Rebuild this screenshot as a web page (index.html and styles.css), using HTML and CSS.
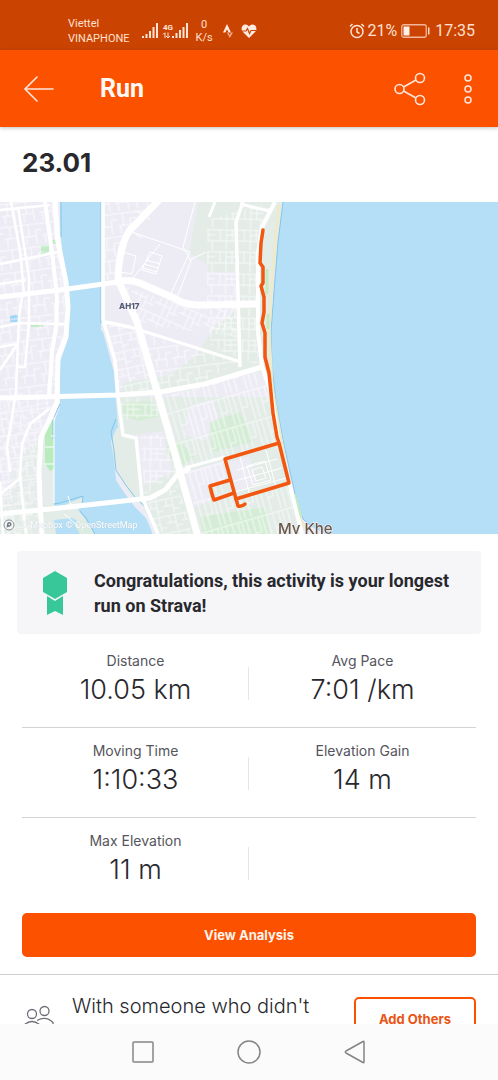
FILE: index.html
```html
<!doctype html>
<html lang="en">
<head>
	<meta charset="utf-8" />
	<meta name="viewport" content="width=device-width, initial-scale=1" />
	<title>Run</title>

	<link rel="stylesheet" href="styles.css">
</head>
<body>

	<!-- BEGIN: Status Bar. -->
	<div class="status">
		<div class="status__carrier">Viettel<br />VINAPHONE</div>
		<svg class="status__signal" width="48" height="18" viewBox="0 0 48 18" fill="#ffe3d5">
			<path d="M1 14h2v2H1zM4.500 12h2v4h-2zM8 9h2v7H8zM11.500 5h2v11h-2zM15 1h2v15h-2z" />
			<path d="M31 14h2v2h-2zM34.500 11h2v5h-2zM38 8h2v8h-2zM41.500 5h2v11h-2zM45 1h2v15h-2z" />
			<text class="status__network" x="22" y="8">4G</text>
			<path d="M24 11v5M22 12.500l2-2M27 10.500v5M25 14l2 2 2-2" fill="none" stroke="#ffe3d5" />
		</svg>
		<div class="status__speed">0<br />K/s</div>
		<svg width="10" height="16" viewBox="0 0 10 16">
			<path d="M0 9.500L4 1l4 8.500H5.600L4 6.200 2.400 9.500z" fill="#ffe9de" />
			<path d="M3.800 9.500h1.800l1.200 2.400L8 9.500h2L6.800 15z" fill="#f0a888" />
		</svg>
		<svg class="status__heart" width="16" height="15" viewBox="0 0 16 15">
			<path d="M8 14L1.500 7.500C-1 4 2-.5 5.500.8 6.700 1.100 7.500 2 8 2.600c.5-.6 1.300-1.500 2.500-1.800C14 -.5 17 4 14.500 7.500z" fill="#ffebe1" />
			<path d="M1 7h4l1.500-2.500L8.500 9.500 10 6.500h5" fill="none" stroke="#cb4300" stroke-width="1.200" />
		</svg>
		<div class="status__right">
			<svg width="16" height="16" viewBox="0 0 16 16" fill="none" stroke="#ffe3d5" stroke-width="1.500">
				<circle cx="8" cy="8.500" r="6" />
				<path d="M8 5v4l2.500 1.500M1 3.500L3.500 1M15 3.500L12.500 1" />
			</svg>
			<span>21%</span>
			<svg class="status__battery" width="29" height="14" viewBox="0 0 29 14">
				<rect x=".75" y=".75" width="24.500" height="12.500" rx="2" fill="none" stroke="#f3b59b" stroke-width="1.300" />
				<path d="M2.500 2.500h6v9h-6z" fill="#fff0e8" />
				<path d="M27 3.500h1.500v7H27z" fill="#ffd9c8" />
			</svg>
			<span>17:35</span>
		</div>
	</div>
	<!-- END: Status Bar. -->

	<!-- BEGIN: App Bar. -->
	<header class="app-bar">
		<button type="button" class="icon-button" aria-label="Back">
			<svg width="32" height="30" viewBox="0 0 32 30" fill="none" stroke="#ffe6da" stroke-width="1.600" stroke-linecap="round">
				<path d="M30 15H2M14 3L2 15l12 12" />
			</svg>
		</button>
		<h1 class="app-bar__title">Run</h1>
		<button type="button" class="icon-button" aria-label="Share">
			<svg width="32" height="34" viewBox="0 0 32 34" fill="none" stroke="#ffe6da" stroke-width="1.600">
				<circle cx="5.500" cy="17" r="4.500" />
				<circle cx="26" cy="6" r="4.500" />
				<circle cx="26" cy="28" r="4.500" />
				<path d="M9.500 15L22 8M9.500 19L22 26" />
			</svg>
		</button>
		<button type="button" class="icon-button app-bar__more" aria-label="More options">
			<svg width="10" height="32" viewBox="0 0 10 32" fill="none" stroke="#ffe6da" stroke-width="1.500">
				<circle cx="5" cy="5" r="3" />
				<circle cx="5" cy="16" r="3" />
				<circle cx="5" cy="27" r="3" />
			</svg>
		</button>
	</header>
	<!-- END: App Bar. -->

	<main class="activity">

		<h2 class="activity__name">23.01</h2>

		<!-- BEGIN: Map. -->
		<div class="map">
			<svg class="map__canvas" viewBox="0 0 498 332" role="img" aria-label="Map of the run">
				<defs>
					<pattern id="blocks-a" width="19" height="23" patternUnits="userSpaceOnUse" patternTransform="rotate(-7)">
						<path d="M0 3h19M6 3v12M0 15h13M13 9v14M13 9h6M3 15v8" />
					</pattern>
					<pattern id="blocks-b" width="24" height="22" patternUnits="userSpaceOnUse" patternTransform="rotate(1)">
						<path d="M0 2h24M0 13h24M5 2v11M11 2v20M17 2v11M21 13v9M11 7h13" />
					</pattern>
					<pattern id="blocks-c" width="26" height="19" patternUnits="userSpaceOnUse" patternTransform="rotate(24)">
						<path d="M0 2h26M0 9h17M5 2v7M11 2v17M17 2v17M17 13h9M22 2v11" />
					</pattern>
					<pattern id="blocks-d" width="21" height="31" patternUnits="userSpaceOnUse" patternTransform="rotate(-16)">
						<path d="M0 2h21M2 2v29M8 2v29M14 2v15M18 2v29M8 17h6" />
					</pattern>
					<pattern id="blocks-e" width="16" height="17" patternUnits="userSpaceOnUse" patternTransform="rotate(-12)">
						<path d="M0 2h16M0 9h10M4 2v7M10 2v15M10 13h6" />
					</pattern>
				</defs>

				<!-- Land. -->
				<path d="M0 0h498v332H0z" fill="#edecf5" />
				<g fill="#e3ece7">
					<path d="M198 0h86l-12 100 1 75-33-10-1-63-28-2-3-37-19-12z" />
					<path d="M212 60h28v-60h35l-14 70v30h-48z" opacity=".6" />
					<path d="M214 125l26-20 20 1 3 60-70 22-75 8 5-15 48-8 25-20z" />
					<path d="M110 195h163l26 137H157l-15-30-10-5-20-40z" />
					<path d="M0 305l60-5 25-5 10 37H0z" />
					<path d="M20 255l30-30 5 75-53 5z" opacity=".7" />
				</g>
				<g fill="#edecf5">
					<path d="M208 70h29v35l-30-2z" />
					<path d="M190 203l22-5 6 15-13 26-22-6z" />
					<path d="M229 260l20-6 9 28-22 8z" />
					<path d="M136 233l27-4 9 42-28 13z" />
					<path d="M185 270l38-11 4 20-20 6 4 14-18 6z" />
				</g>
				<g fill="#d5edd6">
					<path d="M122 201l28-2 10 15-22 5-14-5z" />
					<path d="M210 220l30-10 14 30-42 10z" />
					<path d="M165 246l15-6 15 15-18 12z" />
					<path d="M200 315l65-10 5 27h-67z" />
					<path d="M41 43h8v6l-8 4zM52 38h5v4h-5zM31 123h12v2H31z" fill="#c3ebc5" />
				</g>
				<path d="M10 114l10-2v8H10z" fill="#9fd5f5" />

				<!-- Side streets. -->
				<g opacity=".75">
					<path d="M0 0h58l8 85-4 60-6 60-18 30-7 97H0z" fill="url(#blocks-a)" />
					<path d="M0 200h50l-12 45 2 87H0z" fill="url(#blocks-e)" opacity=".7" />
					<path d="M105 0h52l-28 28-8 50h-16z" fill="url(#blocks-a)" />
					<path d="M122 83l68 23 50-1v30l-105-13z" fill="url(#blocks-c)" />
					<path d="M207 18l65-18-12 65v40h-53z" fill="url(#blocks-b)" />
					<path d="M210 107h48v56l-48-18z" fill="url(#blocks-b)" />
					<path d="M105 122l30 5 22 63h-38z" fill="url(#blocks-e)" />
					<path d="M143 132l95 28-38 22-42 5z" fill="url(#blocks-a)" />
					<path d="M160 195l105-27 14 73-54 14-44 14z" fill="url(#blocks-d)" />
					<path d="M120 196l38-3 6 20-40 5z" fill="url(#blocks-b)" />
					<path d="M140 235l28-5 12 38-35 25z" fill="url(#blocks-b)" />
					<path d="M185 270l40-12 11 40 53-14 8 48h-95z" fill="url(#blocks-d)" />
					<path d="M147 300l30-20 16 52h-34z" fill="url(#blocks-e)" />
				</g>
				<g class="map__street">
					<path d="M132 30l58 20-22 48M160 42l-30 38M195 0l-12 45 8 14-16 42M190 58l16-8M150 50l12 4-6 18-14-4z" />
					<path d="M146 58l14 4M144 62l14 4M143 66l14 4M123 50l13 4-4 18-12-2M135 8l15 10M130 28l12 8" />
					<path d="M237 268l40-11M231 280l51-14M235 290l51-14M240 255l10 39M266 248l10 37M247 264l18-5 6 19-18 5zM252 268l10-3 4 11-10 3z" />
				</g>

				<!-- Water. -->
				<g fill="#b4dff7">
					<path d="M60 0l1 35 2 25 5 25 1 20-2 35-7 20v45l-5 13-3 13 2 35v37l6 2 23-10-1 7-4 6 8 10 9 24h62l-11-26-11-11-10-13-9-14-2-20-3-18 5-13 2-1-4-56-11-40-2-2V0z" />
					<path d="M283 0l-5 40-4 50-3 40 1 35 4 35 7 38 7 32 7 30 6 17 9 8 13 7h173V0z" />
					<path d="M54 318l18-2 10 5 2 11H56z" />
				</g>
				<path d="M74 322l8-4 8 6 4 8H80z" fill="#dcece2" />
				<path d="M54 213l-9 17v32l5 7 4-2z" fill="#b9ebbd" />
				<g fill="none" stroke="#84c6ea">
					<path d="M101 0v121M61 0v35M60 202l-7 15 0 20M116 217l-5 13 3 18 2 20 9 14 10 13" />
					<path d="M54 302l6-1 23-7-1 8M80 309l6 7 9 16M135 295l11 11 11 26" />
					<path d="M283 0l-5 40-4 50-3 40 1 35 4 35 7 38 7 32 7 30 6 17 9 8" />
				</g>
				<path d="M279 3l-6 60-4 65 3 57 9 53 8 44 9 31 9 16" fill="none" stroke="#eeeacb" stroke-width="3" />
				<path d="M267 67v25M268 112v15M294 292l7 23" fill="none" stroke="#c6e9c2" stroke-width="3" />
				<path class="map__street" d="M54 215v86M45 245h9M44 262h10M68 294l4 12M51 234h3M64 312l14 12" />

				<!-- Main roads. -->
				<g class="map__road">
					<path d="M0 8l50-5M0 62l58-12M0 82l26-4M0 125l20-4 45 1M22 95l-3 20-3 75-9 55 3 25M18 5l11 70 0 45-4 45h-7M11 0l10 55 3 40M0 145l17-3M0 168l17-25M0 292l22-17" />
					<path d="M50 206l-20 16-8 20-2 33 6 57M0 280l3 52" />
					<path d="M215 0l-6 15M240 2l29 7M130 125l108 34M185 266l40-11" stroke-width="3" />
					<path d="M243 0l-7 20 4 145M105 120l25 5M103 0v118l12 40 3 37 5 38 13 3 6 59 3 7 13 30" stroke-width="3.500" />
					<path d="M45 0l7 50 5 45-1 30-4 25-3 45" stroke-width="4" />
					<path d="M55 0l3 40 8 40 2 25-2 30-8 20-1 45-7 17-9 18-2 35 1 32 2 30" stroke-width="5" />
					<path d="M0 95l60-7 58-8M0 312l60-6 90-10 15-8 13-16 12-6" stroke-width="5" />
					<path d="M0 196l118-3 42-3 45-8 57-17" stroke-width="5" />
					<path d="M160 -3l-30 31q-11 15-12 50M118 80q11-4 24 2l32 14q11 7 24 7l60-1M118 78l19 42 23 80 20 70 18 65" stroke-width="7" />
					<path d="M275 0l-13 25-4 25v80l4 35 9 25 8 53M289 280l8 32 5 20" stroke-width="4" />
				</g>

				<!-- Route. -->
				<g class="map__route">
					<path d="M263 28l-2 13-1 20 3 4v16l-2 3 3 11v15l-2 11 3 10v24l4 16 4 40 4 24 2 6 10 40-53 16-11-40 54-16" />
					<path d="M230 278l-20 6q2 9 4 14l20-7M236 297l2 7q4 1 7-2" />
				</g>

				<text class="map__label map__label--road" x="119" y="107">AH17</text>
				<text class="map__label map__label--place" x="278" y="332">My Khe</text>
			</svg>
			<div class="map__credit">
				<svg width="12" height="12" viewBox="0 0 12 12">
					<circle cx="6" cy="6" r="5" fill="#f3f7f5" stroke="#8c9297" stroke-width="1" />
					<path d="M3.500 8.500L4 5a2.300 2.300 0 1 1 3 2.500z" fill="#777e83" />
					<circle cx="6.300" cy="5.500" r=".8" fill="#fff" />
				</svg>
				<a href="#mapbox">© Mapbox</a>
				<a href="#osm">© OpenStreetMap</a>
			</div>
		</div>
		<!-- END: Map. -->

		<section class="award">
			<svg class="award__icon" width="26" height="46" viewBox="0 0 26 46" fill="#37c799">
				<path d="M13 1l12 7v14l-12 7L1 22V8z" />
				<path d="M5 26l8 5 8-5v19l-8-4-8 4z" />
			</svg>
			<p class="award__text">Congratulations, this activity is your longest run on Strava!</p>
		</section>

		<dl class="stats">
			<div class="stat">
				<dt>Distance</dt>
				<dd>10.05 km</dd>
			</div>
			<div class="stat">
				<dt>Avg Pace</dt>
				<dd>7:01 /km</dd>
			</div>
			<div class="stat">
				<dt>Moving Time</dt>
				<dd>1:10:33</dd>
			</div>
			<div class="stat">
				<dt>Elevation Gain</dt>
				<dd>14 m</dd>
			</div>
			<div class="stat">
				<dt>Max Elevation</dt>
				<dd>11 m</dd>
			</div>
		</dl>

		<div class="analysis">
			<button type="button" class="button button--primary">View Analysis</button>
		</div>

		<section class="others">
			<svg class="others__icon" width="32" height="26" viewBox="0 0 32 26" fill="none" stroke="#6d6d78" stroke-width="1.300">
				<circle cx="9" cy="9" r="4.500" />
				<circle cx="21.500" cy="6" r="4.500" />
				<path d="M1 23v-3q8-7 16 0v3M14 15.500q9-5 16 2V21H19" />
			</svg>
			<p class="others__text">With someone who didn't</p>
			<button type="button" class="button button--outline">Add Others</button>
		</section>

	</main>

	<!-- BEGIN: System Navigation. -->
	<nav class="system-nav">
		<button type="button" class="icon-button" aria-label="Recent apps">
			<svg width="24" height="24" viewBox="0 0 24 24"><rect x="2" y="2" width="20" height="20" rx="1" /></svg>
		</button>
		<button type="button" class="icon-button" aria-label="Home">
			<svg width="24" height="24" viewBox="0 0 24 24"><circle cx="12" cy="12" r="11" /></svg>
		</button>
		<button type="button" class="icon-button" aria-label="Go back">
			<svg width="24" height="24" viewBox="0 0 24 24"><path d="M21 2v20q0 1-1 .5L3 13q-1.500-1 0-2L20 1.500q1-.5 1 .5z" /></svg>
		</button>
	</nav>
	<!-- END: System Navigation. -->

</body>
</html>
```
FILE: styles.css
```css
html {
	box-sizing: border-box ;
}

*, *:before, *:after {
	box-sizing: inherit ;
}

body {
	background-color: #ffffff ;
	color: #28282d ;
	display: flex ;
	flex-direction: column ;
	font-family: Inter, Roboto, "Liberation Sans", sans-serif ;
	height: 100vh ;
	margin: 0px 0px 0px 0px ;
	overflow: hidden ;
}

svg {
	display: block ;
	flex: 0 0 auto ;
}

button {
	cursor: pointer ;
	font-family: inherit ;
}

.icon-button {
	background: none ;
	border: 0px ;
	padding: 0px 0px 0px 0px ;
}

/* BEGIN: Status Bar. */
.status {
	align-items: center ;
	background-color: #cb4300 ;
	color: #ffe0d1 ;
	display: flex ;
	flex: 0 0 auto ;
	font-family: Roboto, sans-serif ;
	height: 50px ;
	padding: 12px 23px 0px 68px ;
}

.status__carrier {
	font-size: 11px ;
	line-height: 15px ;
	margin-right: 11px ;
}

.status__network {
	font-size: 8px ;
	font-weight: 700 ;
}

.status__speed {
	font-size: 11px ;
	line-height: 13px ;
	margin: 0px 10px 0px 7px ;
	text-align: center ;
}

.status__heart {
	margin-left: 8px ;
}

.status__right {
	align-items: center ;
	display: flex ;
	font-size: 16px ;
	gap: 2px ;
	line-height: 20px ;
	margin-left: auto ;
}

.status__battery {
	margin: 0px 3px 0px 2px ;
}
/* END: Status Bar. */

/* BEGIN: App Bar. */
.app-bar {
	align-items: center ;
	background-color: #fc5200 ;
	box-shadow: 0px 1px 4px rgba( 0, 0, 0, 0.25 ) ;
	display: flex ;
	flex: 0 0 auto ;
	height: 77px ;
	padding: 0px 25px 0px 23px ;
	position: relative ;
}

.app-bar__title {
	color: #fff8f4 ;
	flex: 1 1 auto ;
	font-family: Roboto, sans-serif ;
	font-size: 25px ;
	font-weight: 700 ;
	line-height: 30px ;
	margin: 0px 0px 0px 45px ;
}

.app-bar__more {
	margin-left: 37px ;
}
/* END: App Bar. */

.activity {
	flex: 1 1 0px ;
	min-height: 0px ;
	overflow: hidden ;
}

.activity__name {
	font-size: 26px ;
	font-weight: 700 ;
	line-height: 31px ;
	margin: 0px 0px 0px 0px ;
	padding: 20px 22px 24px 22px ;
}

/* BEGIN: Map. */
.map {
	position: relative ;
}

.map__canvas {
	height: auto ;
	width: 100% ;
}

.map__canvas pattern path,
.map__street,
.map__road {
	fill: none ;
	stroke: #ffffff ;
	stroke-linejoin: round ;
}

.map__road {
	stroke-width: 2.5 ;
}

.map__route {
	fill: none ;
	stroke: #f2560f ;
	stroke-linecap: round ;
	stroke-linejoin: round ;
	stroke-width: 3.5 ;
}

.map__label {
	paint-order: stroke ;
	stroke: #f4f3f8 ;
	stroke-width: 1px ;
}

.map__label--road {
	fill: #565b76 ;
	font-size: 8px ;
	font-weight: 800 ;
}

.map__label--place {
	fill: #6b5748 ;
	font-size: 15px ;
	font-weight: 500 ;
}

.map__credit {
	align-items: center ;
	bottom: 2px ;
	display: flex ;
	font-family: Roboto, sans-serif ;
	font-size: 9px ;
	gap: 3px ;
	left: 3px ;
	line-height: 14px ;
	position: absolute ;
}

.map__credit svg {
	margin-right: 3px ;
}

.map__credit a {
	color: #ffffff ;
	text-decoration: none ;
	text-shadow: 0px 0px 1px #b9c3cc ;
}
/* END: Map. */

/* BEGIN: Award. */
.award {
	align-items: center ;
	background-color: #f6f6f9 ;
	border-radius: 4px ;
	display: flex ;
	gap: 26px ;
	margin: 17px 17px 4px 17px ;
	padding: 17px 24px 16px 25px ;
}

.award__text {
	font-family: Roboto, sans-serif ;
	font-size: 18px ;
	font-weight: 700 ;
	line-height: 25px ;
	margin: 0px 0px 0px 0px ;
}
/* END: Award. */

/* BEGIN: Stats. */
.stats {
	display: grid ;
	grid-template-columns: 1fr 1fr ;
	margin: 0px 22px 5px 22px ;
}

.stat {
	border-bottom: 1px solid #d3d3d7 ;
	height: 90px ;
	padding-top: 13px ;
	position: relative ;
	text-align: center ;
}

.stat:last-child {
	border-bottom: 0px ;
}

/* The short divider between the two columns. */
.stat:nth-child( odd ):after {
	background-color: #e6e6e9 ;
	content: "" ;
	height: 33px ;
	position: absolute ;
	right: 0px ;
	top: 29px ;
	width: 1px ;
}

.stat dt {
	color: #55555c ;
	font-size: 14px ;
	line-height: 20px ;
}

.stat dd {
	font-size: 27px ;
	font-weight: 350 ;
	line-height: 38px ;
	margin: 0px 0px 0px 0px ;
}
/* END: Stats. */

.button {
	border: 2px solid #fc5200 ;
	border-radius: 5px ;
	font-size: 13px ;
	font-weight: 700 ;
	height: 44px ;
}

.button--primary {
	background-color: #fc5200 ;
	color: #fff4ee ;
	width: 100% ;
}

.button--outline {
	background-color: #ffffff ;
	color: #ea5414 ;
	flex: 0 0 auto ;
	padding: 0px 23px 0px 23px ;
}

.analysis {
	border-bottom: 1px solid #cfcfd3 ;
	padding: 0px 22px 17px 22px ;
}

/* BEGIN: Others. */
.others {
	align-items: flex-start ;
	display: flex ;
	padding: 22px 22px 22px 23px ;
}

.others__icon {
	margin-top: 8px ;
}

.others__text {
	flex: 1 1 auto ;
	font-size: 20px ;
	font-weight: 350 ;
	line-height: 30px ;
	margin: -6px 0px 0px 17px ;
}
/* END: Others. */

/* BEGIN: System Navigation. */
.system-nav {
	align-items: center ;
	background-color: #fbfbfb ;
	display: flex ;
	flex: 0 0 auto ;
	gap: 82px ;
	height: 56px ;
	justify-content: center ;
}

.system-nav svg {
	fill: none ;
	stroke: #858585 ;
	stroke-width: 1.5 ;
}
/* END: System Navigation. */
```
